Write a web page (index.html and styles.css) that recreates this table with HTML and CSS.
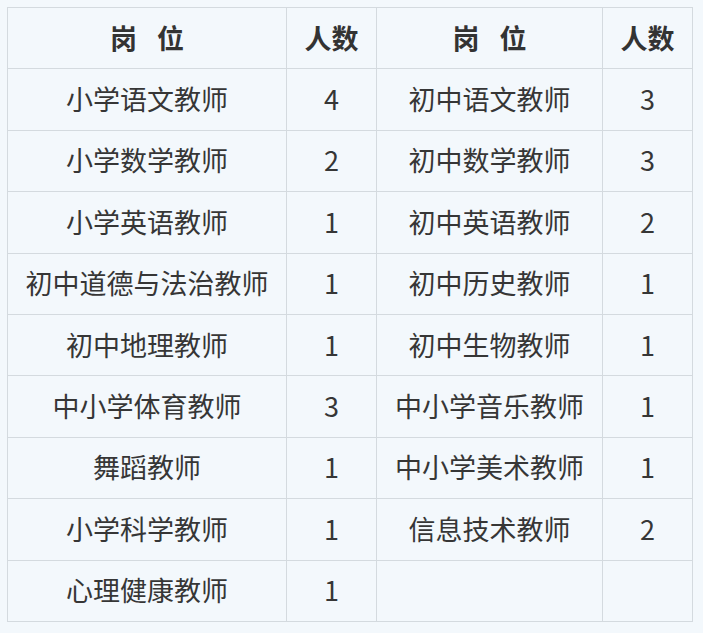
FILE: index.html
```html
<!DOCTYPE html>
<html lang="zh">
<head>
<meta charset="utf-8">
<link rel="stylesheet" href="styles.css">
</head>
<body>
<table class="grid">
  <colgroup>
    <col class="c-name"><col class="c-num"><col class="c-name2"><col class="c-num">
  </colgroup>
  <thead>
    <tr><th><span class="sp">岗</span>位</th><th>人数</th><th><span class="sp">岗</span>位</th><th>人数</th></tr>
  </thead>
  <tbody>
    <tr><td>小学语文教师</td><td>4</td><td>初中语文教师</td><td>3</td></tr>
    <tr><td>小学数学教师</td><td>2</td><td>初中数学教师</td><td>3</td></tr>
    <tr><td>小学英语教师</td><td>1</td><td>初中英语教师</td><td>2</td></tr>
    <tr><td>初中道德与法治教师</td><td>1</td><td>初中历史教师</td><td>1</td></tr>
    <tr><td>初中地理教师</td><td>1</td><td>初中生物教师</td><td>1</td></tr>
    <tr><td>中小学体育教师</td><td>3</td><td>中小学音乐教师</td><td>1</td></tr>
    <tr><td>舞蹈教师</td><td>1</td><td>中小学美术教师</td><td>1</td></tr>
    <tr><td>小学科学教师</td><td>1</td><td>信息技术教师</td><td>2</td></tr>
    <tr><td>心理健康教师</td><td>1</td><td></td><td></td></tr>
  </tbody>
</table>
</body>
</html>
```
FILE: styles.css
```css
html, body {
  margin: 0;
  background: #f3f8fc;
}
body {
  padding: 7px 0 0 7px;
  font-family: "Noto Sans CJK SC", "Noto Sans", sans-serif;
  color: #333;
}
.grid {
  border-collapse: collapse;
  table-layout: fixed;
  width: 686px;
}
.c-name { width: 279px; }
.c-num { width: 90px; }
.c-name2 { width: 226px; }
.grid th, .grid td {
  border: 1px solid #d4dadf;
  height: 58.4px;
  padding: 0 0 2px;
  text-align: center;
  vertical-align: middle;
  font-size: 27px;
  line-height: 1;
  white-space: nowrap;
}
.grid td {
  font-weight: 400;
  color: #363636;
}
.grid th {
  font-weight: 700;
}
.sp {
  margin-right: 20px;
}
```
